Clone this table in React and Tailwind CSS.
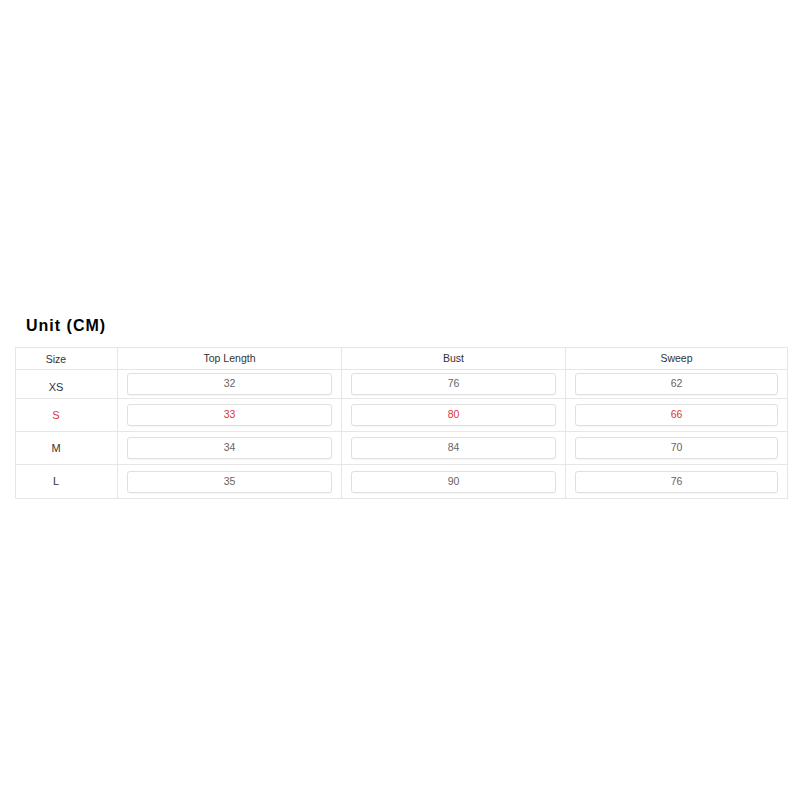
const columns = ['Top Length', 'Bust', 'Sweep'];

const rows = [
  { size: 'XS', values: [32, 76, 62], h: 'h-[29px]', labelPad: 'pt-[6px]' },
  { size: 'S', values: [33, 80, 66], h: 'h-[33px]', highlight: true },
  { size: 'M', values: [34, 84, 70], h: 'h-[33px]' },
  { size: 'L', values: [35, 90, 76], h: 'h-[34px]' },
];

function ValueBox({ value, highlight }) {
  return (
    <div
      className={
        'flex h-[22px] w-full items-center justify-center rounded-[3px] border border-[#e0e0e0] bg-white text-[10.5px] shadow-[0_1px_1px_rgba(0,0,0,0.04)] ' +
        (highlight ? 'text-[#d9363e]' : 'text-[#666]')
      }
    >
      {value}
    </div>
  );
}

export default function App() {
  return (
    <div className="min-h-[800px] bg-white px-[15px] pt-[315px] font-['Liberation_Sans',Arial,sans-serif]">
      <h2 className="mb-[10px] h-[22px] pl-[11px] text-[16px] font-bold leading-[22px] tracking-[1px] text-black">
        Unit (CM)
      </h2>

      <div className="w-[773px] border-l border-t border-[#e6e6e6]">
        {/* header */}
        <div className="grid h-[22px] grid-cols-[102px_224px_224px_1fr] text-[10.5px] text-[#333]">
          <div className="flex items-center justify-center border-b border-r border-[#e6e6e6] pr-[21px] pt-[2px]">Size</div>
          {columns.map((c) => (
            <div key={c} className="flex items-center justify-center border-b border-r border-[#e6e6e6]">
              {c}
            </div>
          ))}
        </div>

        {rows.map((r) => (
          <div key={r.size} className={'grid grid-cols-[102px_224px_224px_1fr] ' + r.h}>
            <div
              className={
                'flex items-center justify-center border-b border-r border-[#e6e6e6] pr-[21px] text-[11px] ' +
                (r.labelPad || '') +
                (r.highlight ? ' text-[#d9363e]' : ' text-[#333]')
              }
            >
              {r.size}
            </div>
            {r.values.map((v, i) => (
              <div key={i} className="flex items-center border-b border-r border-[#e6e6e6] pl-[9px] pr-[9px]">
                <ValueBox value={v} highlight={r.highlight} />
              </div>
            ))}
          </div>
        ))}
      </div>
    </div>
  );
}
